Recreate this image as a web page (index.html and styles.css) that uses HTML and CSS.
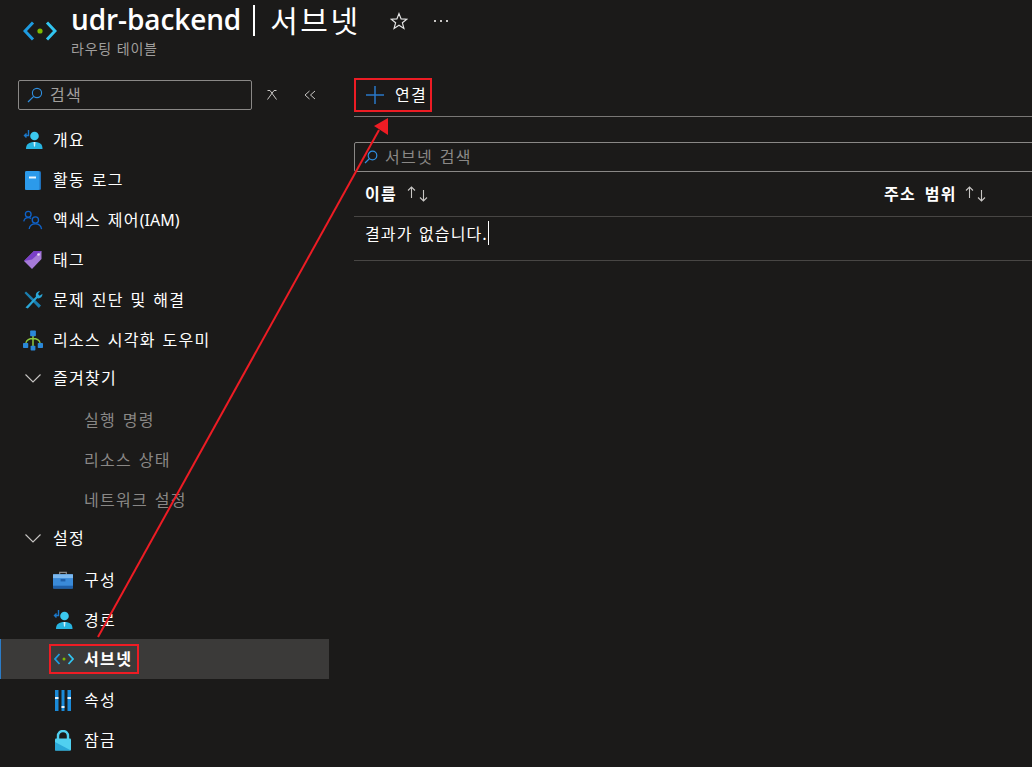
FILE: index.html
```html
<!DOCTYPE html>
<html lang="ko">
<head>
<meta charset="utf-8">
<title>udr-backend | 서브넷</title>
<link rel="stylesheet" href="styles.css">
</head>
<body>
<div class="page">
  <header class="head">
    <svg class="head-icon" width="34" height="20" viewBox="0 0 34 20"><path d="M10 1.500 2 10 10 18.500" fill="none" stroke="#1e9be0" stroke-width="3"/><path d="M24 1.500 32 10 24 18.500" fill="none" stroke="#32c5f0" stroke-width="3"/><circle cx="17" cy="10" r="2.600" fill="#7fba00"/></svg>
    <div class="head-text">
      <div class="title-row">
        <h1 class="title"><span class="title-latin">udr-backend</span><span class="title-bar"></span>서브넷</h1>
        <svg class="star" width="18" height="18" viewBox="0 0 18 18"><path d="M9 1.600 11.100 6.900 16.800 7.200 12.400 10.800 13.900 16.400 9 13.300 4.100 16.400 5.600 10.800 1.200 7.200 6.900 6.900Z" fill="none" stroke="#e6e6e6" stroke-width="1.200"/></svg>
        <span class="more"><i></i><i></i><i></i></span>
      </div>
      <div class="subtitle">라우팅 테이블</div>
    </div>
  </header>
  <div class="main">
    <nav class="side">
      <div class="side-tools">
        <div class="side-search">
          <svg width="16" height="16" viewBox="0 0 16 16"><circle cx="10" cy="6" r="4.600" fill="none" stroke="#2f8fe0" stroke-width="1.100"/><path d="M6.700 9.300 1 15" stroke="#2f8fe0" stroke-width="1.200"/></svg>
          <span>검색</span>
        </div>
        <svg class="tool-x" width="10" height="10" viewBox="0 0 10 10"><path d="M0.500 0.500H3L9.500 9.500M9.500 0.500H7L0.500 9.500" fill="none" stroke="#c8c6c4" stroke-width="1"/></svg>
        <svg class="tool-c" width="12" height="10" viewBox="0 0 12 10"><path d="M5.500 1 1 5 5.500 9M11 1 6.500 5 11 9" fill="none" stroke="#c8c6c4" stroke-width="1"/></svg>
      </div>
      <a class="item">
        <svg class="ic" width="20" height="20" viewBox="0 0 20 20"><circle cx="11.500" cy="6" r="4.300" fill="#3cc8ee"/><path d="M3 19c0-5 3-7 8.500-7s8 2 8 7z" fill="#27b4e0"/><path d="M10.500 12h2l-.4 4-.6 1-.6-1z" fill="#d8f3fb"/><path d="M5.500 0v5.500H1.500M3.500 3.500 1.500 5.500 3.500 7.500" fill="none" stroke="#1c78c8" stroke-width="1.400"/></svg>
        <span>개요</span>
      </a>
      <a class="item">
        <svg class="ic" width="20" height="20" viewBox="0 0 20 20"><rect x="2" y="1" width="16" height="19" rx="1.500" fill="#1f6fb8"/><rect x="2" y="1" width="14.500" height="19" rx="1.500" fill="#2c9aea"/><rect x="6" y="6.500" width="7" height="2" fill="#e8f4fc"/></svg>
        <span>활동 로그</span>
      </a>
      <a class="item">
        <svg class="ic" width="21" height="20" viewBox="0 0 21 20"><g fill="none" stroke="#0f62c8" stroke-width="1.400"><circle cx="5.500" cy="4" r="3"/><path d="M.8 11.500c.6-2.800 2-4 4.700-4 1.300 0 2.300.3 3 1"/><circle cx="13" cy="10" r="3.300"/><path d="M6.500 19.500c.4-3.500 2.700-5.500 6.500-5.500s6 2 6.500 5.500"/></g></svg>
        <span>액세스 제어<span class="latin">(IAM)</span></span>
      </a>
      <a class="item">
        <svg class="ic" width="20" height="20" viewBox="0 0 20 20"><path d="M1 11 11 1h7.500v8L9 19z" fill="#a67ad8"/><path d="M1 11 11 1h7.500L9 9.500z" fill="#7a3fc8"/><circle cx="15.500" cy="4.500" r="1.300" fill="#e8dcf6"/></svg>
        <span>태그</span>
      </a>
      <a class="item">
        <svg class="ic" width="20" height="20" viewBox="0 0 20 20"><path d="M1.500 3 3 1.500 18 15.500 15.800 18z" fill="#1a7fb0"/><path d="M2.500 17.500 13 6.500c-.7-2.400.6-5 4-5.500l-2 3 1.700 1.800 2.800-2c0 3.500-2.800 5.200-5.300 4.500L4.800 18.500z" fill="#2aa7d8"/></svg>
        <span>문제 진단 및 해결</span>
      </a>
      <a class="item">
        <svg class="ic" width="21" height="21" viewBox="0 0 21 21"><path d="M10.500 5v13M3 13c1-3 4-4.500 7.500-4.500S17 10 18 13" fill="none" stroke="#8cc63f" stroke-width="1.600"/><rect x="7.500" y="0" width="6" height="6" rx=".8" fill="#2b88d8"/><rect x="0" y="13" width="5.500" height="5.500" rx=".8" fill="#2b88d8"/><rect x="15.500" y="13" width="5.500" height="5.500" rx=".8" fill="#2b88d8"/><rect x="8" y="16" width="5" height="5" rx=".8" fill="#2b88d8"/></svg>
        <span>리소스 시각화 도우미</span>
      </a>
      <a class="group">
        <svg class="chev" width="16" height="9" viewBox="0 0 16 9"><path d="M.5.500 8 8 15.500.500" fill="none" stroke="#c8c6c4" stroke-width="1.100"/></svg>
        <span>즐겨찾기</span>
      </a>
      <a class="item sub muted"><span>실행 명령</span></a>
      <a class="item sub muted"><span>리소스 상태</span></a>
      <a class="item sub muted"><span>네트워크 설정</span></a>
      <a class="group">
        <svg class="chev" width="16" height="9" viewBox="0 0 16 9"><path d="M.5.500 8 8 15.500.500" fill="none" stroke="#c8c6c4" stroke-width="1.100"/></svg>
        <span>설정</span>
      </a>
      <a class="item child">
        <svg class="ic" width="21" height="18" viewBox="0 0 21 18"><path d="M7 3.500V1h7v2.500" fill="none" stroke="#8a8886" stroke-width="1.300"/><rect x="0" y="3" width="21" height="15" rx="1.500" fill="#3a8ad8"/><rect x="0" y="3" width="21" height="4" fill="#7cb8ee"/><rect x="0" y="15" width="21" height="3" fill="#1f5fa8"/><rect x="8" y="8" width="5" height="2.500" fill="#1f5fa8"/></svg>
        <span>구성</span>
      </a>
      <a class="item child">
        <svg class="ic" width="20" height="20" viewBox="0 0 20 20"><circle cx="11.500" cy="6" r="4.300" fill="#3cc8ee"/><path d="M3 19c0-5 3-7 8.500-7s8 2 8 7z" fill="#27b4e0"/><path d="M10.500 12h2l-.4 4-.6 1-.6-1z" fill="#d8f3fb"/><path d="M5.500 0v5.500H1.500M3.500 3.500 1.500 5.500 3.500 7.500" fill="none" stroke="#1c78c8" stroke-width="1.400"/></svg>
        <span>경로</span>
      </a>
      <a class="item active">
        <span class="mark">
          <svg width="20" height="12" viewBox="0 0 20 12"><path d="M5.500 1 1 6 5.500 11" fill="none" stroke="#1e9be0" stroke-width="1.800"/><path d="M14.500 1 19 6 14.500 11" fill="none" stroke="#32c5f0" stroke-width="1.800"/><circle cx="10" cy="6" r="1.500" fill="#7fba00"/></svg>
          <b>서브넷</b>
        </span>
      </a>
      <a class="item child after">
        <svg class="ic" width="18" height="21" viewBox="0 0 18 21"><g fill="#1a8ad8"><rect x="1" y="0" width="3.500" height="21"/><rect x="7.500" y="0" width="3" height="21"/><rect x="13.500" y="0" width="3.500" height="21"/></g><g fill="#e8f4fc"><rect x="1" y="7" width="3.500" height="2"/><rect x="7.500" y="16" width="3" height="2"/><rect x="13.500" y="7" width="3.500" height="2"/></g></svg>
        <span>속성</span>
      </a>
      <a class="item child">
        <svg class="ic" width="18" height="21" viewBox="0 0 18 21"><path d="M4 9V6a5 5 0 0 1 10 0v3" fill="none" stroke="#50d0f0" stroke-width="2.400"/><rect x="1" y="8.500" width="16" height="12" rx="1" fill="#50d0f0"/><path d="M1 20.500V12l16 8.500z" fill="#2aa8d8"/></svg>
        <span>잠금</span>
      </a>
    </nav>
    <section class="content">
      <div class="toolbar">
        <div class="connect">
          <svg width="20" height="20" viewBox="0 0 20 20"><path d="M10 1v18M1 10h18" stroke="#2a78c8" stroke-width="1.500"/></svg>
          <span>연결</span>
        </div>
      </div>
      <div class="filter">
        <svg width="14" height="14" viewBox="0 0 14 14"><circle cx="8.500" cy="5.500" r="4.300" fill="none" stroke="#2f8fe0" stroke-width="1.200"/><path d="M5.500 8.500 1 13" stroke="#2f8fe0" stroke-width="1.200"/></svg>
        <span>서브넷 검색</span>
      </div>
      <div class="thead">
        <div class="col col-a"><b>이름</b><svg class="sort" width="21" height="16" viewBox="0 0 21 16"><path d="M4.500 12V1M1 4.500 4.500 1 8 4.500M16.500 4V15M13 11.500 16.500 15 20 11.500" fill="none" stroke="#c8c6c4" stroke-width="1.100"/></svg></div>
        <div class="col col-b"><b>주소 범위</b><svg class="sort" width="21" height="16" viewBox="0 0 21 16"><path d="M4.500 12V1M1 4.500 4.500 1 8 4.500M16.500 4V15M13 11.500 16.500 15 20 11.500" fill="none" stroke="#c8c6c4" stroke-width="1.100"/></svg></div>
      </div>
      <div class="tbody"><span class="empty">결과가 없습니다.</span></div>
    </section>
  </div>
  <svg class="arrow" width="1032" height="767" viewBox="0 0 1032 767"><path d="M98 637 379 130" stroke="#ed1c24" stroke-width="2"/><path d="M388 118 374 126 388 135z" fill="#ed1c24"/></svg>
</div>
</body>
</html>
```
FILE: styles.css
```css
* { box-sizing: border-box; }
html, body { margin: 0; padding: 0; height: 100%; }
body {
  background: #1b1a19;
  color: #fff;
  font-family: "Noto Sans CJK KR", "Noto Sans", sans-serif;
  font-size: 16px;
  overflow: hidden;
}
.page { position: relative; width: 1032px; height: 767px; overflow: hidden; }
.head { display: flex; align-items: flex-start; height: 80px; padding-left: 23px; }
.head-icon { margin-top: 21px; margin-right: 14px; flex: none; }
.head-text { display: flex; flex-direction: column; }
.title-row { display: flex; align-items: center; height: 41px; }
.title {
  display: flex;
  align-items: center;
  align-self: flex-start;
  margin: 0;
  font-size: 30px;
  font-weight: 400;
  letter-spacing: 2.500px;
  line-height: 39px;
  white-space: nowrap;
}
.title-latin { font-family: "Open Sans", sans-serif; font-size: 28px; font-weight: 600; letter-spacing: -.1px; }
.title-bar { width: 2px; height: 31px; background: #fff; margin: 2px 15px 0 12px; }
.star { margin-left: 29px; }
.more { display: flex; gap: 4px; margin-left: 26px; }
.more i { width: 2px; height: 2px; background: #c8c6c4; display: block; }
.subtitle { font-size: 14px; color: #a19f9d; letter-spacing: .8px; line-height: 14px; }
.main { display: flex; height: 687px; }
.side { width: 329px; flex: none; display: flex; flex-direction: column; }
.side-tools { display: flex; align-items: center; height: 40px; padding: 0 0 10px 18px; }
.side-search {
  display: flex;
  align-items: center;
  gap: 7px;
  width: 234px;
  height: 30px;
  padding-left: 8px;
  border: 1px solid #8a8886;
  border-radius: 2px;
  color: #a19f9d;
  letter-spacing: 1.200px;
}
.side-search span, .connect span, .filter span { margin-bottom: 2px; }
.tool-x { margin-left: 15px; }
.tool-c { margin-left: 27px; }
.item, .group {
  display: flex;
  align-items: center;
  flex: none;
  height: 40px;
  padding-left: 23px;
  letter-spacing: 1.280px;
  word-spacing: 1px;
  white-space: nowrap;
}
.item > span, .group > span { margin-bottom: 2px; }
.latin { font-family: "Noto Sans", sans-serif; font-size: 16px; letter-spacing: 0; }
.ic { flex: none; }
.item .ic { margin-right: 10px; width: 20px; }
.group { height: 36px; margin-bottom: 4px; padding-left: 25px; }
.chev { margin-right: 12px; }
.sub { padding-left: 84px; }
.muted { color: #8a8886; }
.child { padding-left: 53px; }
.item.child .ic { margin-right: 11px; }
.active {
  background: #3b3a39;
  border-left: 1px solid #2b7cc8;
  margin-top: -1px;
  padding-left: 48px;
}
.after { margin-top: 1px; }
.item > .mark {
  display: flex;
  align-items: center;
  gap: 10px;
  width: 90px;
  height: 30px;
  padding-left: 3px;
  margin-bottom: 0;
  border: 2px solid #ed1c24;
}
.mark b { font-weight: 700; letter-spacing: 1.400px; margin-bottom: 2px; }
.content { flex: 1; padding-left: 25px; min-width: 0; }
.toolbar { height: 39px; border-bottom: 1px solid #797775; margin-top: -2px; }
.connect {
  display: flex;
  align-items: center;
  gap: 10px;
  width: 78px;
  height: 34px;
  padding-left: 9px;
  border: 2px solid #ed1c24;
  letter-spacing: 1.280px;
}
.filter {
  display: flex;
  align-items: center;
  gap: 7px;
  height: 30px;
  margin-top: 25px;
  padding-left: 9px;
  margin-right: -4px;
  border: 1px solid #8a8886;
  border-radius: 2px;
  color: #8a8886;
  letter-spacing: 1.280px;
  word-spacing: 1px;
}
.thead {
  display: flex;
  align-items: center;
  height: 45px;
  border-bottom: 1px solid #484644;
  padding-left: 11px;
  letter-spacing: 1.280px;
  word-spacing: 1px;
}
.col { display: flex; align-items: center; }
.col b { margin-bottom: 2px; }
.col-b b { word-spacing: 3px; }
.col-a { width: 519px; }
.col-b { flex: 1; }
.sort { margin-left: 10px; }
.col-b .sort { margin-left: 8px; }
.tbody { height: 44px; padding: 4px 0 0 11px; border-bottom: 1px solid #484644; letter-spacing: 1.100px; word-spacing: 1px; }
.empty { border-right: 1px solid #fff; }
.arrow { position: absolute; left: 0; top: 0; pointer-events: none; }
```
